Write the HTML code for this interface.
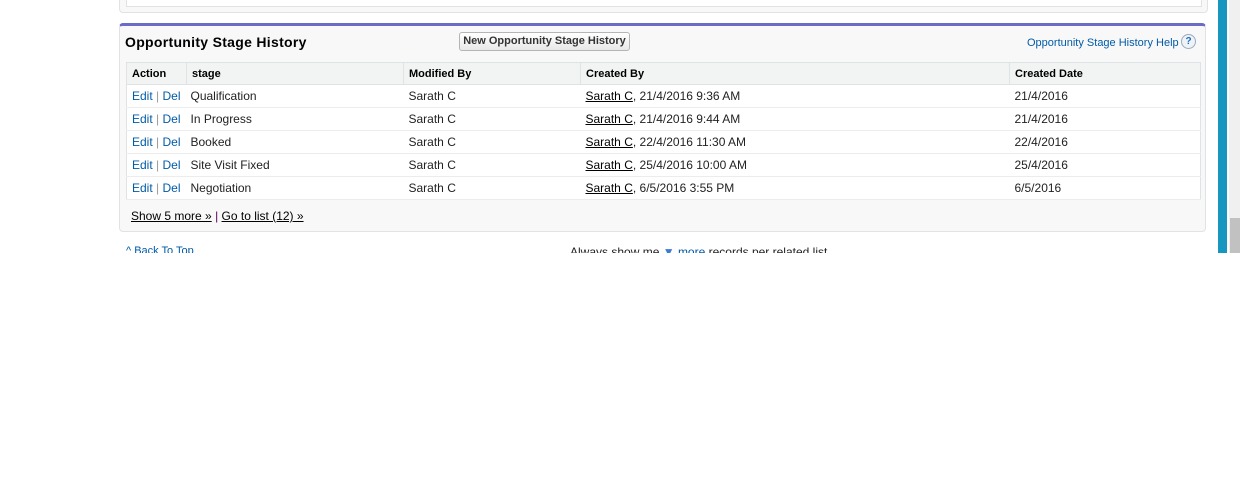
<!DOCTYPE html>
<html><head><style>
body{margin:0;width:1240px;height:502px;background:#fff;font-family:"Liberation Sans",Arial,sans-serif;font-size:12px;color:#222;position:relative;overflow:hidden}
.clip{position:absolute;left:0;top:0;width:1240px;height:253px;overflow:hidden}
.top{position:absolute;left:119px;top:-10px;width:1087px;height:21px;border:1px solid #e0e3e5;border-radius:4px;background:#f8f8f8}
.topin{position:absolute;left:126px;top:-10px;width:1074px;height:15px;border:1px solid #e0e3e5;background:#fff}
.box{position:absolute;left:119px;top:23px;width:1087px;background:#f8f8f8;border:1px solid #e0e3e5;border-top:3px solid #6a6ac8;border-radius:4px;box-sizing:border-box;height:209px}
h2{position:absolute;left:125px;top:34px;margin:0;font-size:14px;font-weight:bold;color:#000;letter-spacing:0.3px}
.btn{position:absolute;left:459px;top:32px;height:17px;border:1px solid #b5b5b5;border-radius:3px;background:linear-gradient(#fff,#e8e8e8);font-size:11px;font-weight:bold;line-height:16px;color:#333;width:169px;text-align:center}
.help{position:absolute;left:1027px;top:37px;color:#015ba7;font-size:11px}
.q{position:absolute;left:1181px;top:34px;width:13px;height:13px;border-radius:50%;border:1px solid #9ab;background:#eef3f8;color:#1f6bb8;font-size:10px;font-weight:bold;text-align:center;line-height:13px}
table{position:absolute;left:126px;top:62px;width:1075px;border-collapse:collapse;background:#fff;border:1px solid #e0e3e5;table-layout:fixed}
th{background:#f2f3f3;text-align:left;font-size:11px;font-weight:bold;color:#000;height:21px;padding:0 5px;border-left:1px solid #e0e3e5;border-bottom:1px solid #e0e3e5}
td{height:22px;padding:0 5px;border-bottom:1px solid #ececec;font-size:12px;white-space:nowrap}
td:nth-child(2){padding-left:4px}
a.e{color:#015ba7;text-decoration:none}
u{color:#000}
.foot{position:absolute;left:131px;top:209px;font-size:12px}
.foot a{color:#000;text-decoration:underline}
.back{position:absolute;left:126px;top:245px;color:#015ba7;font-size:11px}
.always{position:absolute;left:570px;top:245px;font-size:12px}
.blue{position:absolute;left:1218px;top:0;width:9px;height:253px;background:#1797c0}
.sb{position:absolute;left:1229px;top:0;width:11px;height:253px;background:#f0f0f0}
.th{position:absolute;left:1230px;top:218px;width:10px;height:35px;background:#c1c1c1}
</style></head><body><div class="clip">
<div class="top"></div><div class="topin"></div>
<div class="box"></div>
<h2>Opportunity Stage History</h2>
<div class="btn">New Opportunity Stage History</div>
<div class="help">Opportunity Stage History Help</div><div class="q">?</div>
<table>
<colgroup><col style="width:60px"><col style="width:217px"><col style="width:177px"><col style="width:429px"><col></colgroup>
<tr><th style="border-left:none">Action</th><th>stage</th><th>Modified By</th><th>Created By</th><th>Created Date</th></tr>
<tr><td><a class="e">Edit</a> <span style="color:#999">|</span> <a class="e">Del</a></td><td>Qualification</td><td>Sarath C</td><td><u>Sarath C</u>, 21/4/2016 9:36 AM</td><td>21/4/2016</td></tr>
<tr><td><a class="e">Edit</a> <span style="color:#999">|</span> <a class="e">Del</a></td><td>In Progress</td><td>Sarath C</td><td><u>Sarath C</u>, 21/4/2016 9:44 AM</td><td>21/4/2016</td></tr>
<tr><td><a class="e">Edit</a> <span style="color:#999">|</span> <a class="e">Del</a></td><td>Booked</td><td>Sarath C</td><td><u>Sarath C</u>, 22/4/2016 11:30 AM</td><td>22/4/2016</td></tr>
<tr><td><a class="e">Edit</a> <span style="color:#999">|</span> <a class="e">Del</a></td><td>Site Visit Fixed</td><td>Sarath C</td><td><u>Sarath C</u>, 25/4/2016 10:00 AM</td><td>25/4/2016</td></tr>
<tr><td><a class="e">Edit</a> <span style="color:#999">|</span> <a class="e">Del</a></td><td>Negotiation</td><td>Sarath C</td><td><u>Sarath C</u>, 6/5/2016 3:55 PM</td><td>6/5/2016</td></tr>
</table>
<div class="foot"><a>Show 5 more »</a> <span style="color:#505">|</span> <a>Go to list (12) »</a></div>
<div class="back">^ Back To Top</div>
<div class="always">Always show me <span style="color:#3a7bd5">▼</span> <span style="color:#015ba7">more</span> records per related list</div>
<div class="blue"></div><div class="sb"></div><div class="th"></div>
</div></body></html>
